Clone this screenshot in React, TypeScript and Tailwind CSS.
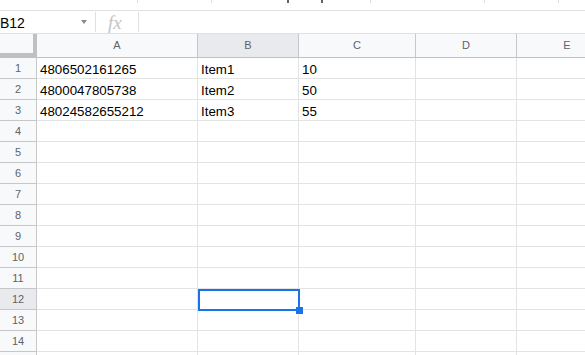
import React from "react";

const cols = [
  { name: "A", w: "w-[161px]" },
  { name: "B", w: "w-[101px]" },
  { name: "C", w: "w-[117px]" },
  { name: "D", w: "w-[101px]" },
  { name: "E", w: "w-[101px]" },
];

const data: Record<number, string[]> = {
  1: ["4806502161265", "Item1", "10"],
  2: ["4800047805738", "Item2", "50"],
  3: ["48024582655212", "Item3", "55"],
};

export default function App() {
  const rows = Array.from({ length: 15 }, (_, i) => i + 1);
  return (
    <div
      className="w-[585px] h-[355px] overflow-hidden bg-white"
      style={{ fontFamily: '"Liberation Sans", Arial, sans-serif' }}
    >
      {/* cut-off toolbar strip */}
      <div className="h-[11px] border-b border-[#e0e0e0] flex items-start">
        <div className="ml-[137px] w-px h-[3px] bg-[#dadce0]" />
        <div className="ml-[73px] w-px h-[3px] bg-[#dadce0]" />
        <div className="ml-[75px] w-[2px] h-[3px] bg-[#5f6368]" />
        <div className="ml-[32px] w-[2px] h-[3px] bg-[#5f6368]" />
        <div className="ml-[47px] w-px h-[3px] bg-[#dadce0]" />
        <div className="ml-[113px] w-px h-[3px] bg-[#dadce0]" />
        <div className="ml-[73px] w-px h-[3px] bg-[#dadce0]" />
      </div>

      {/* formula bar */}
      <div className="h-[23px] border-b border-[#e0e0e0] flex items-center">
        <div className="w-[78px] text-[14px] text-black leading-none pt-[1px]">B12</div>
        <div className="ml-[3px] w-0 h-0 border-l-[3.5px] border-r-[3.5px] border-t-[4px] border-l-transparent border-r-transparent border-t-[#8a8a8a]" />
        <div className="ml-[8px] w-px h-[20px] bg-[#e0e0e0]" />
        <div
          className="ml-[12px] w-[18px] text-[19px] italic text-[#c4c4c4] leading-none"
          style={{ fontFamily: '"Liberation Serif", "Times New Roman", serif' }}
        >
          fx
        </div>
        <div className="ml-[12px] w-px h-[20px] bg-[#e0e0e0]" />
      </div>

      {/* column headers */}
      <div className="flex h-[24px] border-b border-[#c0c0c0] bg-[#f8f9fa]">
        <div className="w-[37px] shrink-0 border-r-4 border-b-4 border-[#c0c0c0] bg-[#f8f9fa]" />
        {cols.map((c) => (
          <div
            key={c.name}
            className={`${c.w} shrink-0 border-r border-[#c7c7c7] flex items-center justify-center text-[11px] text-[#5f6368] ${
              c.name === "B" ? "bg-[#e8eaed]" : ""
            }`}
          >
            {c.name}
          </div>
        ))}
      </div>

      {/* rows */}
      {rows.map((r) => (
        <div key={r} className="flex h-[21px]">
          <div
            className={`w-[37px] shrink-0 border-r border-b border-[#c7c7c7] flex items-center justify-center text-[11px] text-[#5f6368] ${
              r === 12 ? "bg-[#e8eaed]" : "bg-[#f8f9fa]"
            }`}
          >
            {r < 15 ? r : ""}
          </div>
          {cols.map((c, ci) => (
            <div
              key={c.name}
              className={`${c.w} shrink-0 border-r border-b border-[#e2e3e3] flex items-end px-[3px] text-[13.33px] leading-[16px] text-black whitespace-nowrap ${
                r === 12 && ci === 1 ? "relative" : ""
              }`}
            >
              {data[r]?.[ci] ?? ""}
              {r === 12 && ci === 1 && (
                <div className="absolute left-0 top-0 w-[102px] h-[22px] border-2 border-[#1a73e8] z-10">
                  <div className="absolute left-[96px] top-[16px] w-[7px] h-[7px] bg-[#1a73e8]" />
                </div>
              )}
            </div>
          ))}
        </div>
      ))}
    </div>
  );
}
